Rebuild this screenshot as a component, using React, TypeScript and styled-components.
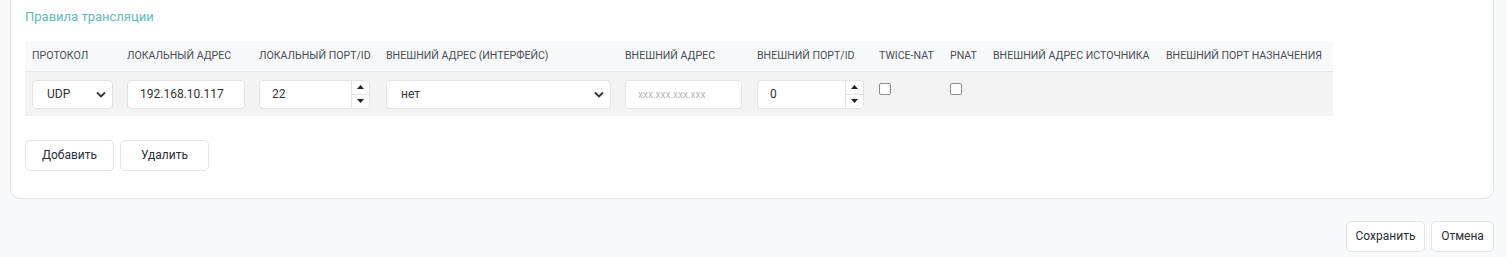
import React from 'react';
import styled, { createGlobalStyle } from 'styled-components';

const GlobalStyle = createGlobalStyle`
  body {
    margin: 0;
    background-color: #f8f9fb;
    font-family: Roboto, "Liberation Sans", sans-serif;
    color: #333333;
  }
`;

const Page = styled.div`
  display: flex;
  flex-direction: column;
  padding: 0 13px 0 10px;
`;

const Card = styled.div`
  background-color: #ffffff;
  border: 1px solid #e3e4e8;
  border-top: 0;
  border-radius: 0 0 10px 10px;
  padding: 9px 14px 27px 14px;
`;

const Title = styled.div`
  font-size: 13px;
  color: #5fbdb6;
  height: 16px;
  line-height: 16px;
  margin-bottom: 16px;
`;

const Table = styled.table`
  border-collapse: collapse;
  width: 1308px;
  table-layout: fixed;
`;

const HeadCell = styled.th<{ w: number }>`
  box-sizing: border-box;
  width: ${(p) => p.w}px;
  height: 30px;
  padding: 0 7px;
  background-color: #f8f9fa;
  border-bottom: 1px solid #e4e5e7;
  text-align: left;
  font-size: 10.6px;
  font-weight: 400;
  color: #484c53;
  white-space: nowrap;
  text-transform: uppercase;
`;

const Cell = styled.td`
  background-color: #f3f3f3;
  padding: 8px 7px 7px 7px;
  vertical-align: top;
`;

const Field = styled.div<{ w: number }>`
  width: ${(p) => p.w}px;
  height: 29px;
  box-sizing: border-box;
  border: 1px solid #e2e3e5;
  border-radius: 4px;
  background-color: #ffffff;
  display: flex;
  align-items: center;
`;

const TextInput = styled.input`
  border: 0;
  outline: none;
  background: transparent;
  width: 100%;
  min-width: 0;
  padding: 0 12px;
  font-family: inherit;
  font-size: 12px;
  color: #333333;

  &::placeholder {
    color: #b5b8bd;
    font-size: 10px;
  }
`;

const SelectText = styled.span`
  flex: 1;
  padding-left: 14px;
  font-size: 12px;
  color: #333333;
`;

const Chevron = styled.svg`
  margin-right: 6px;
`;

const Spinner = styled.div`
  width: 17px;
  flex-shrink: 0;
  height: 100%;
  border-left: 1px solid #e2e3e5;
  display: flex;
  flex-direction: column;
`;

const SpinHalf = styled.div<{ top?: boolean }>`
  flex: 1;
  display: flex;
  align-items: center;
  justify-content: center;
  border-bottom: ${(p) => (p.top ? '1px solid #e2e3e5' : '0')};
`;

const Check = styled.div`
  width: 10px;
  height: 10px;
  margin-top: 3px;
  border: 1px solid #8a8d91;
  border-radius: 2px;
  background-color: #ffffff;
`;

const ButtonRow = styled.div<{ end?: boolean }>`
  display: flex;
  gap: 6px;
  justify-content: ${(p) => (p.end ? 'flex-end' : 'flex-start')};
`;

const Button = styled.button<{ w: number }>`
  width: ${(p) => p.w}px;
  height: 31px;
  border: 1px solid #e2e3e5;
  border-radius: 5px;
  background-color: #ffffff;
  font-family: inherit;
  font-size: 12px;
  color: #2b2f36;
  cursor: pointer;
`;

const Actions = styled(ButtonRow)`
  margin-top: 24px;
`;

const Buttons = styled(ButtonRow)`
  margin-top: 22px;
`;

const ChevronIcon = () => (
  <Chevron width="10" height="7" viewBox="0 0 10 7">
    <path d="M1 1.5 L5 5.5 L9 1.5" fill="none" stroke="#333" strokeWidth="1.8" />
  </Chevron>
);

const NumberField: React.FC<{ w: number; value: string }> = ({ w, value }) => (
  <Field w={w}>
    <TextInput defaultValue={value} />
    <Spinner>
      <SpinHalf top>
        <svg width="7" height="4" viewBox="0 0 7 4">
          <path d="M0 4 L3.5 0 L7 4 Z" fill="#222" />
        </svg>
      </SpinHalf>
      <SpinHalf>
        <svg width="7" height="4" viewBox="0 0 7 4">
          <path d="M0 0 L3.5 4 L7 0 Z" fill="#222" />
        </svg>
      </SpinHalf>
    </Spinner>
  </Field>
);

const columns: [string, number][] = [
  ['Протокол', 95],
  ['Локальный адрес', 132],
  ['Локальный порт/ID', 127],
  ['Внешний адрес (интерфейс)', 239],
  ['Внешний адрес', 132],
  ['Внешний порт/ID', 122],
  ['Twice-NAT', 71],
  ['PNAT', 43],
  ['Внешний адрес источника', 173],
  ['Внешний порт назначения', 174]
];

const App: React.FC = () => (
  <Page>
    <GlobalStyle />
    <Card>
      <Title>Правила трансляции</Title>
      <Table>
        <thead>
          <tr>
            {columns.map(([name, w]) => (
              <HeadCell key={name} w={w}>
                {name}
              </HeadCell>
            ))}
          </tr>
        </thead>
        <tbody>
          <tr>
            <Cell>
              <Field w={81}>
                <SelectText>UDP</SelectText>
                <ChevronIcon />
              </Field>
            </Cell>
            <Cell>
              <Field w={118}>
                <TextInput defaultValue="192.168.10.117" />
              </Field>
            </Cell>
            <Cell>
              <NumberField w={111} value="22" />
            </Cell>
            <Cell>
              <Field w={225}>
                <SelectText>нет</SelectText>
                <ChevronIcon />
              </Field>
            </Cell>
            <Cell>
              <Field w={117}>
                <TextInput placeholder="xxx.xxx.xxx.xxx" />
              </Field>
            </Cell>
            <Cell>
              <NumberField w={107} value="0" />
            </Cell>
            <Cell>
              <Check />
            </Cell>
            <Cell>
              <Check />
            </Cell>
            <Cell />
            <Cell />
          </tr>
        </tbody>
      </Table>
      <Actions>
        <Button w={89}>Добавить</Button>
        <Button w={89}>Удалить</Button>
      </Actions>
    </Card>
    <Buttons end>
      <Button w={79}>Сохранить</Button>
      <Button w={63}>Отмена</Button>
    </Buttons>
  </Page>
);

export default App;
